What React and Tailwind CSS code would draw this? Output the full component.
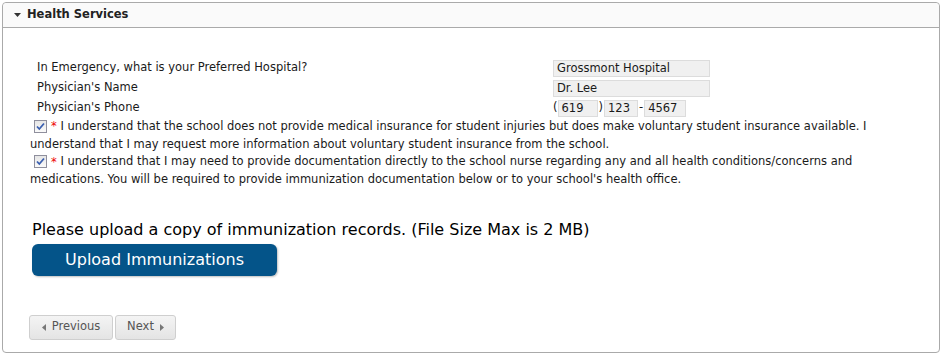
import { useState } from "react";

const font = { fontFamily: '"DejaVu Sans", Verdana, sans-serif' };

function Check({ checked = true }) {
  return (
    <span className="inline-flex h-[13px] w-[13px] shrink-0 items-center justify-center border border-[#8f8f9d] bg-gradient-to-b from-[#e6e6e6] to-[#fafafa] align-[-2px]">
      {checked && (
        <svg viewBox="0 0 11 11" className="h-[11px] w-[11px]">
          <path d="M2 5.5 L4.3 8 L9 2.5" fill="none" stroke="#3a5fb0" strokeWidth="1.8" />
        </svg>
      )}
    </span>
  );
}

function Field({ value, w }) {
  return (
    <span className={`inline-block h-[17px] border border-[#dcdcdc] bg-[#f0f0f0] pl-[3px] leading-[15px] ${w}`}>{value}</span>
  );
}

export default function App() {
  const [agree, setAgree] = useState([true, true]);

  const rows = [
    { label: "In Emergency, what is your Preferred Hospital?", value: "Grossmont Hospital" },
    { label: "Physician's Name", value: "Dr. Lee" },
  ];

  return (
    <div className="h-[354px] w-[942px] bg-white px-[2px] pt-[2px] text-[11.5px] text-[#1a1a1a]" style={font}>
      <div className="flex h-[351px] flex-col rounded-[4px] border border-[#aaaaaa]">
        <div className="flex h-[25px] items-center gap-[6px] rounded-t-[4px] border-b border-[#aaaaaa] bg-[#fafafa] pl-[11px]">
          <svg viewBox="0 0 7 4" className="h-[4px] w-[7px]">
            <path d="M0 0 H7 L3.5 4 Z" fill="#333" />
          </svg>
          <span className="text-[11.5px] font-bold text-[#222]">Health Services</span>
        </div>

        <div className="pl-[27px] pt-[30px]">
          <div className="pl-[7px]">
            {rows.map((r) => (
              <div key={r.label} className="flex h-[20px] items-center">
                <span className="w-[516px]">{r.label}</span>
                <Field value={r.value} w="w-[157px]" />
              </div>
            ))}
            <div className="flex h-[20px] items-center">
              <span className="w-[516px]">Physician's Phone</span>
              <span>(</span>
              <Field value="619" w="w-[40px]" />
              <span className="px-[1px]">)</span>
              <Field value="123" w="w-[34px]" />
              <span className="px-[1px]">-</span>
              <Field value="4567" w="w-[42px]" />
            </div>
          </div>

          <div className="w-[885px] leading-[17.5px]">
            <p>
              <span className="inline-block w-[4px]" />
              <button onClick={() => setAgree([!agree[0], agree[1]])} className="align-middle">
                <Check checked={agree[0]} />
              </button>
              <span className="ml-[4px] text-[#e00]">*</span> I understand that the school does not provide medical insurance for student injuries but does make voluntary student insurance available. I understand that I may request more information about voluntary student insurance from the school.
            </p>
            <p>
              <span className="inline-block w-[4px]" />
              <button onClick={() => setAgree([agree[0], !agree[1]])} className="align-middle">
                <Check checked={agree[1]} />
              </button>
              <span className="ml-[4px] text-[#e00]">*</span> I understand that I may need to provide documentation directly to the school nurse regarding any and all health conditions/concerns and medications. You will be required to provide immunization documentation below or to your school's health office.
            </p>
          </div>

          <div className="mt-[30px] pl-[2px]">
            <p className="text-[16px] leading-[22px] text-black">Please upload a copy of immunization records. (File Size Max is 2 MB)</p>
            <button className="mt-[3px] flex h-[32px] w-[245px] items-center justify-center rounded-[6px] bg-[#045489] text-[16px] text-white shadow-[1px_1px_2px_rgba(0,0,0,0.25)]">
              Upload Immunizations
            </button>
          </div>

          <div className="-ml-px mt-[39px] flex gap-[2px]">
            <button className="flex h-[25px] w-[84px] items-center justify-center gap-[6px] rounded-[3px] border border-[#cfcfcf] bg-gradient-to-b from-[#f4f4f4] to-[#e4e4e4] text-[11.5px] text-[#555]">
              <svg viewBox="0 0 4 7" className="h-[7px] w-[4px]"><path d="M4 0 V7 L0 3.5 Z" fill="#777" /></svg>
              Previous
            </button>
            <button className="flex h-[25px] w-[61px] items-center justify-center gap-[6px] rounded-[3px] border border-[#cfcfcf] bg-gradient-to-b from-[#f4f4f4] to-[#e4e4e4] text-[11.5px] text-[#555]">
              Next
              <svg viewBox="0 0 4 7" className="h-[7px] w-[4px]"><path d="M0 0 V7 L4 3.5 Z" fill="#777" /></svg>
            </button>
          </div>
        </div>
      </div>
    </div>
  );
}
